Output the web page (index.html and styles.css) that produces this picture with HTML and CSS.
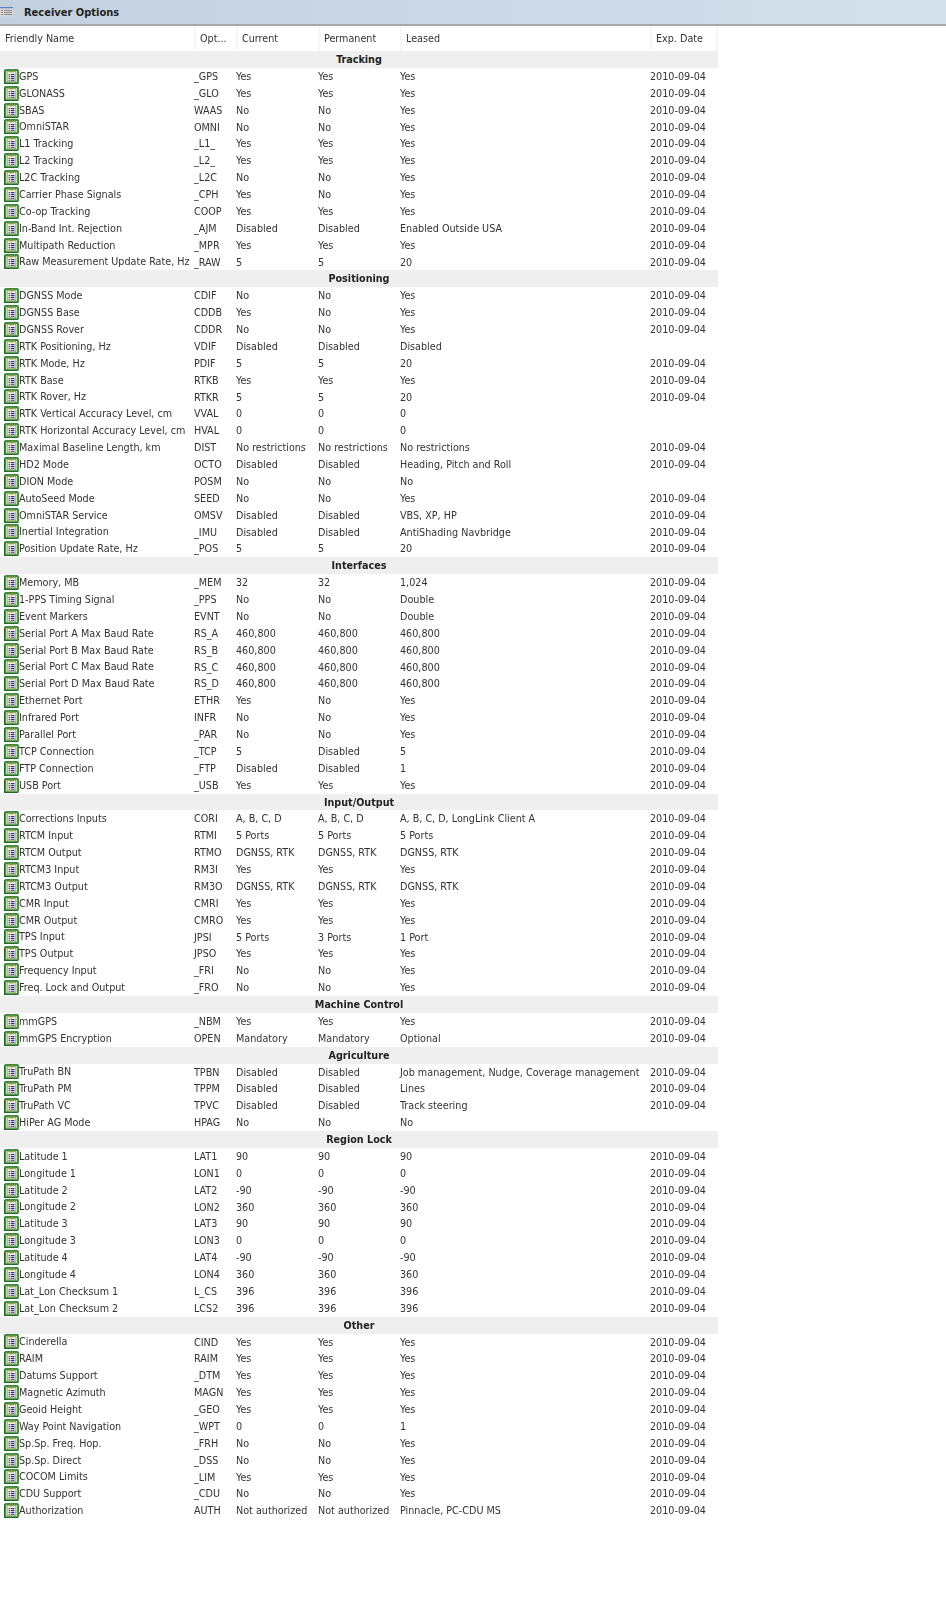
FILE: index.html
```html
<!DOCTYPE html>
<html lang="en">
<head>
<meta charset="utf-8">
<title>Receiver Options</title>
<link rel="stylesheet" href="styles.css">
</head>
<body>
<svg class="defs" width="0" height="0" aria-hidden="true">
<symbol id="opt" viewBox="0 0 16 16">
<rect x="1" y="1" width="14" height="14" rx="1" fill="#d6ecc0" stroke="#3c8c3c" stroke-width="2"/>
<path d="M0.6 1.5v13.9h13.9" fill="none" stroke="#1f6a28" stroke-width="1.2"/>
<rect x="3.4" y="2.4" width="9.2" height="11.2" fill="#f6f6d6" stroke="#8d9a5a" stroke-width="0.8"/>
<rect x="5.5" y="1.6" width="5" height="2" fill="#8e9a4c"/>
<path d="M5 6h1.2M5 8h1.2M5 10h1.2M5 12h1.2" stroke="#22229c" stroke-width="1.2"/>
<path d="M7.2 6h4M7.2 8h4M7.2 10h4M7.2 12h4" stroke="#2f2fb0" stroke-width="1.1"/>
</symbol>
<symbol id="win" viewBox="0 0 14 10">
<rect x="0" y="0" width="13" height="1.5" fill="#5a7fc0"/>
<rect x="0" y="1.5" width="13" height="8" fill="#d8d8d8"/>
<path d="M4 3.5h8M4 5.5h8M4 7.5h8" stroke="#8a8a8a" stroke-width="1"/>
<path d="M1 3.5h2M1 5.5h2M1 7.5h2" stroke="#b08a50" stroke-width="1"/>
</symbol>
</svg>
<header class="titlebar"><svg class="winicon"><use href="#win"/></svg><h1>Receiver Options</h1></header>
<table class="grid">
<thead><tr><th>Friendly Name</th><th>Opt...</th><th>Current</th><th>Permanent</th><th>Leased</th><th>Exp. Date</th></tr></thead>
<tbody>
<tr class="grp"><td colspan="6">Tracking</td></tr>
<tr><td><svg class="ic"><use href="#opt"/></svg>GPS</td><td>_GPS</td><td>Yes</td><td>Yes</td><td>Yes</td><td>2010-09-04</td></tr>
<tr><td><svg class="ic"><use href="#opt"/></svg>GLONASS</td><td>_GLO</td><td>Yes</td><td>Yes</td><td>Yes</td><td>2010-09-04</td></tr>
<tr><td><svg class="ic"><use href="#opt"/></svg>SBAS</td><td>WAAS</td><td>No</td><td>No</td><td>Yes</td><td>2010-09-04</td></tr>
<tr><td><svg class="ic"><use href="#opt"/></svg>OmniSTAR</td><td>OMNI</td><td>No</td><td>No</td><td>Yes</td><td>2010-09-04</td></tr>
<tr><td><svg class="ic"><use href="#opt"/></svg>L1 Tracking</td><td>_L1_</td><td>Yes</td><td>Yes</td><td>Yes</td><td>2010-09-04</td></tr>
<tr><td><svg class="ic"><use href="#opt"/></svg>L2 Tracking</td><td>_L2_</td><td>Yes</td><td>Yes</td><td>Yes</td><td>2010-09-04</td></tr>
<tr><td><svg class="ic"><use href="#opt"/></svg>L2C Tracking</td><td>_L2C</td><td>No</td><td>No</td><td>Yes</td><td>2010-09-04</td></tr>
<tr><td><svg class="ic"><use href="#opt"/></svg>Carrier Phase Signals</td><td>_CPH</td><td>Yes</td><td>No</td><td>Yes</td><td>2010-09-04</td></tr>
<tr><td><svg class="ic"><use href="#opt"/></svg>Co-op Tracking</td><td>COOP</td><td>Yes</td><td>Yes</td><td>Yes</td><td>2010-09-04</td></tr>
<tr><td><svg class="ic"><use href="#opt"/></svg>In-Band Int. Rejection</td><td>_AJM</td><td>Disabled</td><td>Disabled</td><td>Enabled Outside USA</td><td>2010-09-04</td></tr>
<tr><td><svg class="ic"><use href="#opt"/></svg>Multipath Reduction</td><td>_MPR</td><td>Yes</td><td>Yes</td><td>Yes</td><td>2010-09-04</td></tr>
<tr><td><svg class="ic"><use href="#opt"/></svg>Raw Measurement Update Rate, Hz</td><td>_RAW</td><td>5</td><td>5</td><td>20</td><td>2010-09-04</td></tr>
<tr class="grp"><td colspan="6">Positioning</td></tr>
<tr><td><svg class="ic"><use href="#opt"/></svg>DGNSS Mode</td><td>CDIF</td><td>No</td><td>No</td><td>Yes</td><td>2010-09-04</td></tr>
<tr><td><svg class="ic"><use href="#opt"/></svg>DGNSS Base</td><td>CDDB</td><td>Yes</td><td>No</td><td>Yes</td><td>2010-09-04</td></tr>
<tr><td><svg class="ic"><use href="#opt"/></svg>DGNSS Rover</td><td>CDDR</td><td>No</td><td>No</td><td>Yes</td><td>2010-09-04</td></tr>
<tr><td><svg class="ic"><use href="#opt"/></svg>RTK Positioning, Hz</td><td>VDIF</td><td>Disabled</td><td>Disabled</td><td>Disabled</td><td></td></tr>
<tr><td><svg class="ic"><use href="#opt"/></svg>RTK Mode, Hz</td><td>PDIF</td><td>5</td><td>5</td><td>20</td><td>2010-09-04</td></tr>
<tr><td><svg class="ic"><use href="#opt"/></svg>RTK Base</td><td>RTKB</td><td>Yes</td><td>Yes</td><td>Yes</td><td>2010-09-04</td></tr>
<tr><td><svg class="ic"><use href="#opt"/></svg>RTK Rover, Hz</td><td>RTKR</td><td>5</td><td>5</td><td>20</td><td>2010-09-04</td></tr>
<tr><td><svg class="ic"><use href="#opt"/></svg>RTK Vertical Accuracy Level, cm</td><td>VVAL</td><td>0</td><td>0</td><td>0</td><td></td></tr>
<tr><td><svg class="ic"><use href="#opt"/></svg>RTK Horizontal Accuracy Level, cm</td><td>HVAL</td><td>0</td><td>0</td><td>0</td><td></td></tr>
<tr><td><svg class="ic"><use href="#opt"/></svg>Maximal Baseline Length, km</td><td>DIST</td><td>No restrictions</td><td>No restrictions</td><td>No restrictions</td><td>2010-09-04</td></tr>
<tr><td><svg class="ic"><use href="#opt"/></svg>HD2 Mode</td><td>OCTO</td><td>Disabled</td><td>Disabled</td><td>Heading, Pitch and Roll</td><td>2010-09-04</td></tr>
<tr><td><svg class="ic"><use href="#opt"/></svg>DION Mode</td><td>POSM</td><td>No</td><td>No</td><td>No</td><td></td></tr>
<tr><td><svg class="ic"><use href="#opt"/></svg>AutoSeed Mode</td><td>SEED</td><td>No</td><td>No</td><td>Yes</td><td>2010-09-04</td></tr>
<tr><td><svg class="ic"><use href="#opt"/></svg>OmniSTAR Service</td><td>OMSV</td><td>Disabled</td><td>Disabled</td><td>VBS, XP, HP</td><td>2010-09-04</td></tr>
<tr><td><svg class="ic"><use href="#opt"/></svg>Inertial Integration</td><td>_IMU</td><td>Disabled</td><td>Disabled</td><td>AntiShading Navbridge</td><td>2010-09-04</td></tr>
<tr><td><svg class="ic"><use href="#opt"/></svg>Position Update Rate, Hz</td><td>_POS</td><td>5</td><td>5</td><td>20</td><td>2010-09-04</td></tr>
<tr class="grp"><td colspan="6">Interfaces</td></tr>
<tr><td><svg class="ic"><use href="#opt"/></svg>Memory, MB</td><td>_MEM</td><td>32</td><td>32</td><td>1,024</td><td>2010-09-04</td></tr>
<tr><td><svg class="ic"><use href="#opt"/></svg>1-PPS Timing Signal</td><td>_PPS</td><td>No</td><td>No</td><td>Double</td><td>2010-09-04</td></tr>
<tr><td><svg class="ic"><use href="#opt"/></svg>Event Markers</td><td>EVNT</td><td>No</td><td>No</td><td>Double</td><td>2010-09-04</td></tr>
<tr><td><svg class="ic"><use href="#opt"/></svg>Serial Port A Max Baud Rate</td><td>RS_A</td><td>460,800</td><td>460,800</td><td>460,800</td><td>2010-09-04</td></tr>
<tr><td><svg class="ic"><use href="#opt"/></svg>Serial Port B Max Baud Rate</td><td>RS_B</td><td>460,800</td><td>460,800</td><td>460,800</td><td>2010-09-04</td></tr>
<tr><td><svg class="ic"><use href="#opt"/></svg>Serial Port C Max Baud Rate</td><td>RS_C</td><td>460,800</td><td>460,800</td><td>460,800</td><td>2010-09-04</td></tr>
<tr><td><svg class="ic"><use href="#opt"/></svg>Serial Port D Max Baud Rate</td><td>RS_D</td><td>460,800</td><td>460,800</td><td>460,800</td><td>2010-09-04</td></tr>
<tr><td><svg class="ic"><use href="#opt"/></svg>Ethernet Port</td><td>ETHR</td><td>Yes</td><td>No</td><td>Yes</td><td>2010-09-04</td></tr>
<tr><td><svg class="ic"><use href="#opt"/></svg>Infrared Port</td><td>INFR</td><td>No</td><td>No</td><td>Yes</td><td>2010-09-04</td></tr>
<tr><td><svg class="ic"><use href="#opt"/></svg>Parallel Port</td><td>_PAR</td><td>No</td><td>No</td><td>Yes</td><td>2010-09-04</td></tr>
<tr><td><svg class="ic"><use href="#opt"/></svg>TCP Connection</td><td>_TCP</td><td>5</td><td>Disabled</td><td>5</td><td>2010-09-04</td></tr>
<tr><td><svg class="ic"><use href="#opt"/></svg>FTP Connection</td><td>_FTP</td><td>Disabled</td><td>Disabled</td><td>1</td><td>2010-09-04</td></tr>
<tr><td><svg class="ic"><use href="#opt"/></svg>USB Port</td><td>_USB</td><td>Yes</td><td>Yes</td><td>Yes</td><td>2010-09-04</td></tr>
<tr class="grp"><td colspan="6">Input/Output</td></tr>
<tr><td><svg class="ic"><use href="#opt"/></svg>Corrections Inputs</td><td>CORI</td><td>A, B, C, D</td><td>A, B, C, D</td><td>A, B, C, D, LongLink Client A</td><td>2010-09-04</td></tr>
<tr><td><svg class="ic"><use href="#opt"/></svg>RTCM Input</td><td>RTMI</td><td>5 Ports</td><td>5 Ports</td><td>5 Ports</td><td>2010-09-04</td></tr>
<tr><td><svg class="ic"><use href="#opt"/></svg>RTCM Output</td><td>RTMO</td><td>DGNSS, RTK</td><td>DGNSS, RTK</td><td>DGNSS, RTK</td><td>2010-09-04</td></tr>
<tr><td><svg class="ic"><use href="#opt"/></svg>RTCM3 Input</td><td>RM3I</td><td>Yes</td><td>Yes</td><td>Yes</td><td>2010-09-04</td></tr>
<tr><td><svg class="ic"><use href="#opt"/></svg>RTCM3 Output</td><td>RM3O</td><td>DGNSS, RTK</td><td>DGNSS, RTK</td><td>DGNSS, RTK</td><td>2010-09-04</td></tr>
<tr><td><svg class="ic"><use href="#opt"/></svg>CMR Input</td><td>CMRI</td><td>Yes</td><td>Yes</td><td>Yes</td><td>2010-09-04</td></tr>
<tr><td><svg class="ic"><use href="#opt"/></svg>CMR Output</td><td>CMRO</td><td>Yes</td><td>Yes</td><td>Yes</td><td>2010-09-04</td></tr>
<tr><td><svg class="ic"><use href="#opt"/></svg>TPS Input</td><td>JPSI</td><td>5 Ports</td><td>3 Ports</td><td>1 Port</td><td>2010-09-04</td></tr>
<tr><td><svg class="ic"><use href="#opt"/></svg>TPS Output</td><td>JPSO</td><td>Yes</td><td>Yes</td><td>Yes</td><td>2010-09-04</td></tr>
<tr><td><svg class="ic"><use href="#opt"/></svg>Frequency Input</td><td>_FRI</td><td>No</td><td>No</td><td>Yes</td><td>2010-09-04</td></tr>
<tr><td><svg class="ic"><use href="#opt"/></svg>Freq. Lock and Output</td><td>_FRO</td><td>No</td><td>No</td><td>Yes</td><td>2010-09-04</td></tr>
<tr class="grp"><td colspan="6">Machine Control</td></tr>
<tr><td><svg class="ic"><use href="#opt"/></svg>mmGPS</td><td>_NBM</td><td>Yes</td><td>Yes</td><td>Yes</td><td>2010-09-04</td></tr>
<tr><td><svg class="ic"><use href="#opt"/></svg>mmGPS Encryption</td><td>OPEN</td><td>Mandatory</td><td>Mandatory</td><td>Optional</td><td>2010-09-04</td></tr>
<tr class="grp"><td colspan="6">Agriculture</td></tr>
<tr><td><svg class="ic"><use href="#opt"/></svg>TruPath BN</td><td>TPBN</td><td>Disabled</td><td>Disabled</td><td>Job management, Nudge, Coverage management</td><td>2010-09-04</td></tr>
<tr><td><svg class="ic"><use href="#opt"/></svg>TruPath PM</td><td>TPPM</td><td>Disabled</td><td>Disabled</td><td>Lines</td><td>2010-09-04</td></tr>
<tr><td><svg class="ic"><use href="#opt"/></svg>TruPath VC</td><td>TPVC</td><td>Disabled</td><td>Disabled</td><td>Track steering</td><td>2010-09-04</td></tr>
<tr><td><svg class="ic"><use href="#opt"/></svg>HiPer AG Mode</td><td>HPAG</td><td>No</td><td>No</td><td>No</td><td></td></tr>
<tr class="grp"><td colspan="6">Region Lock</td></tr>
<tr><td><svg class="ic"><use href="#opt"/></svg>Latitude 1</td><td>LAT1</td><td>90</td><td>90</td><td>90</td><td>2010-09-04</td></tr>
<tr><td><svg class="ic"><use href="#opt"/></svg>Longitude 1</td><td>LON1</td><td>0</td><td>0</td><td>0</td><td>2010-09-04</td></tr>
<tr><td><svg class="ic"><use href="#opt"/></svg>Latitude 2</td><td>LAT2</td><td>-90</td><td>-90</td><td>-90</td><td>2010-09-04</td></tr>
<tr><td><svg class="ic"><use href="#opt"/></svg>Longitude 2</td><td>LON2</td><td>360</td><td>360</td><td>360</td><td>2010-09-04</td></tr>
<tr><td><svg class="ic"><use href="#opt"/></svg>Latitude 3</td><td>LAT3</td><td>90</td><td>90</td><td>90</td><td>2010-09-04</td></tr>
<tr><td><svg class="ic"><use href="#opt"/></svg>Longitude 3</td><td>LON3</td><td>0</td><td>0</td><td>0</td><td>2010-09-04</td></tr>
<tr><td><svg class="ic"><use href="#opt"/></svg>Latitude 4</td><td>LAT4</td><td>-90</td><td>-90</td><td>-90</td><td>2010-09-04</td></tr>
<tr><td><svg class="ic"><use href="#opt"/></svg>Longitude 4</td><td>LON4</td><td>360</td><td>360</td><td>360</td><td>2010-09-04</td></tr>
<tr><td><svg class="ic"><use href="#opt"/></svg>Lat_Lon Checksum 1</td><td>L_CS</td><td>396</td><td>396</td><td>396</td><td>2010-09-04</td></tr>
<tr><td><svg class="ic"><use href="#opt"/></svg>Lat_Lon Checksum 2</td><td>LCS2</td><td>396</td><td>396</td><td>396</td><td>2010-09-04</td></tr>
<tr class="grp"><td colspan="6">Other</td></tr>
<tr><td><svg class="ic"><use href="#opt"/></svg>Cinderella</td><td>CIND</td><td>Yes</td><td>Yes</td><td>Yes</td><td>2010-09-04</td></tr>
<tr><td><svg class="ic"><use href="#opt"/></svg>RAIM</td><td>RAIM</td><td>Yes</td><td>Yes</td><td>Yes</td><td>2010-09-04</td></tr>
<tr><td><svg class="ic"><use href="#opt"/></svg>Datums Support</td><td>_DTM</td><td>Yes</td><td>Yes</td><td>Yes</td><td>2010-09-04</td></tr>
<tr><td><svg class="ic"><use href="#opt"/></svg>Magnetic Azimuth</td><td>MAGN</td><td>Yes</td><td>Yes</td><td>Yes</td><td>2010-09-04</td></tr>
<tr><td><svg class="ic"><use href="#opt"/></svg>Geoid Height</td><td>_GEO</td><td>Yes</td><td>Yes</td><td>Yes</td><td>2010-09-04</td></tr>
<tr><td><svg class="ic"><use href="#opt"/></svg>Way Point Navigation</td><td>_WPT</td><td>0</td><td>0</td><td>1</td><td>2010-09-04</td></tr>
<tr><td><svg class="ic"><use href="#opt"/></svg>Sp.Sp. Freq. Hop.</td><td>_FRH</td><td>No</td><td>No</td><td>Yes</td><td>2010-09-04</td></tr>
<tr><td><svg class="ic"><use href="#opt"/></svg>Sp.Sp. Direct</td><td>_DSS</td><td>No</td><td>No</td><td>Yes</td><td>2010-09-04</td></tr>
<tr><td><svg class="ic"><use href="#opt"/></svg>COCOM Limits</td><td>_LIM</td><td>Yes</td><td>Yes</td><td>Yes</td><td>2010-09-04</td></tr>
<tr><td><svg class="ic"><use href="#opt"/></svg>CDU Support</td><td>_CDU</td><td>No</td><td>No</td><td>Yes</td><td>2010-09-04</td></tr>
<tr><td><svg class="ic"><use href="#opt"/></svg>Authorization</td><td>AUTH</td><td>Not authorized</td><td>Not authorized</td><td>Pinnacle, PC-CDU MS</td><td>2010-09-04</td></tr>
</tbody>
</table>
</body>
</html>
```
FILE: styles.css
```css
html, body { margin: 0; padding: 0; background: #fff; }
body { font-family: "DejaVu Sans Condensed", "DejaVu Sans", sans-serif; font-stretch: condensed; font-size: 10.7px; color: #333; height: 1600px; overflow: hidden; }
.defs { position: absolute; }
.titlebar { display: flex; align-items: center; height: 24px; background: linear-gradient(90deg, #c3d1df, #d4e0ec); border-bottom: 2px solid #a8a8a8; }
.winicon { width: 14px; height: 10px; margin-right: 10px; }
.titlebar h1 { margin: 0; font-size: 11px; font-weight: bold; color: #222; }
.grid { display: grid; grid-template-columns: 194px 42px 82px 82px 250px 68px; grid-template-rows: 25px; width: 718px; grid-auto-rows: 16.88px; border-collapse: collapse; filter: blur(0.25px); }
.grid thead, .grid tbody, .grid tr { display: contents; }
.grid th { font-weight: normal; text-align: left; padding: 0 0 0 4px; line-height: 25px; border-left: 2px solid #f6f6f6; white-space: nowrap; overflow: hidden; }
.grid th:first-child { border-left: 0; padding-left: 5px; }
.grid th:last-child { border-right: 2px solid #f6f6f6; }
.grid td { padding: 1px 0 0; line-height: 16px; white-space: nowrap; }
.grid td:first-child { display: flex; align-items: center; }
.grp td, .grid .grp td:first-child { display: block; grid-column: 1 / -1; background: #efefef; text-align: center; font-weight: bold; color: #222; }
.ic { width: 15px; height: 15px; margin: -1px 0 0 4px; flex: none; }
```
